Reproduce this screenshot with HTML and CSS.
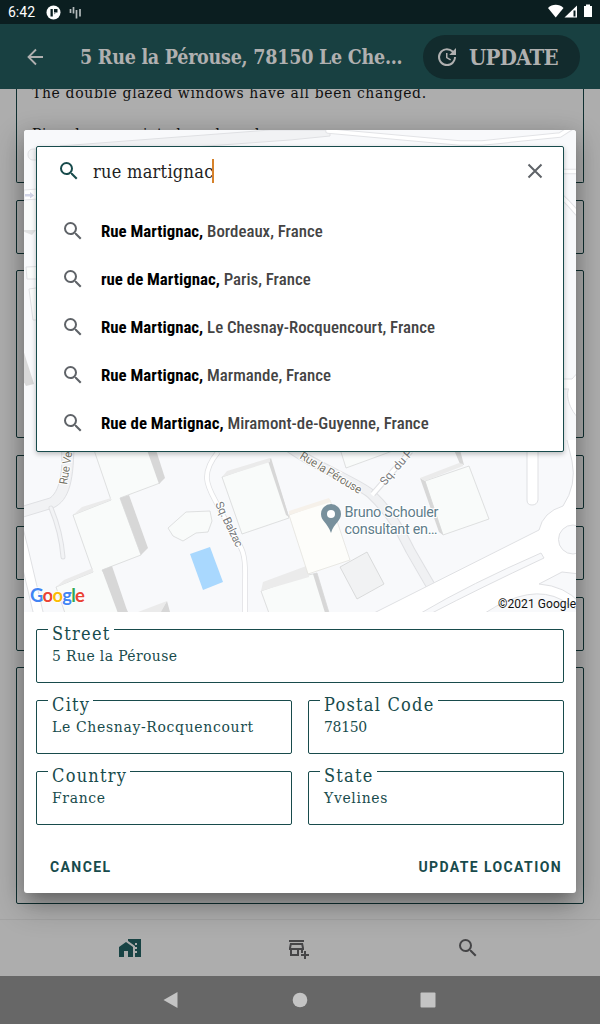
FILE: index.html
```html
<!DOCTYPE html>
<html lang="en">
<head>
<meta charset="utf-8">
<title>Update location</title>
<link rel="stylesheet" href="styles.css">
</head>
<body>
<svg class="defs" aria-hidden="true">
  <symbol id="search" viewBox="0 0 24 24"><path d="M15.5 14h-.79l-.28-.27A6.47 6.47 0 0 0 16 9.500 6.500 6.500 0 1 0 9.500 16c1.610 0 3.090-.59 4.230-1.570l.27.28v.79l5 4.990L20.490 19l-4.990-5zm-6 0C7.010 14 5 11.990 5 9.500S7.010 5 9.500 5 14 7.010 14 9.500 11.990 14 9.500 14z"/></symbol>
</svg>
<div class="screen">
  <div class="status">
    <span class="clock">6:42</span>
    <svg class="s-app" width="15" height="15" viewBox="0 0 15 15"><circle cx="7.500" cy="7.500" r="7" fill="#fff"/><path d="M4.500 4h2.300v7.500H4.500zM8 4h3.500v3.500H8z" fill="#0b1e20"/><path d="M8 7.500h2.500l-2.500 2z" fill="#8b9495"/></svg>
    <svg class="s-bars" width="13" height="13" viewBox="0 0 13 13"><path d="M1.500 3v4M4.500 1v6.500M7.500 4v8.500M11 3v7.500" stroke="#b4bbbc" stroke-width="1.700"/></svg>
    <svg class="s-right" width="46" height="14" viewBox="0 0 46 14"><path d="M0 4C4-.2 11.500-.2 15.500 4L7.700 13.500z" fill="#fff"/><path d="M16.500 13.500 29 1.500v12z" fill="#fff"/><path d="M25.500 6.500h2v6h-2z" fill="#0b1e20"/><path d="M36 2h2V.5h4V2h2v11h-8z" fill="#fff"/></svg>
  </div>
  <header class="appbar">
    <svg class="back" width="24" height="24" viewBox="0 0 24 24"><path d="M20 12H5.500M13 4.500 5.500 12l7.500 7.500" fill="none" stroke="#b0b0b0" stroke-width="1.800"/></svg>
    <h1 class="title">5 Rue la Pérouse, 78150 Le Che…</h1>
    <button class="update"><svg width="24" height="24" viewBox="0 0 24 24"><path d="M21 10.120h-6.780l2.740-2.820c-2.730-2.700-7.150-2.800-9.880-.1a6.870 6.870 0 0 0 0 9.790 7.020 7.020 0 0 0 9.880 0C18.320 15.650 19 14.080 19 12.100h2c0 1.980-.88 4.550-2.640 6.290-3.510 3.480-9.210 3.480-12.720 0-3.500-3.470-3.530-9.110-.02-12.580a8.987 8.987 0 0 1 12.650 0L21 3v7.120zM12.500 8v4.250l3.500 2.080-.72 1.210L11 13V8h1.500z"/></svg><span>UPDATE</span></button>
  </header>
  <main class="content">
    <div class="card note"><p>The double glazed windows have all been changed.</p><p class="next">Pine doors, quiet shared yard</p></div>
    <div class="card small"></div>
    <div class="card medium"></div>
    <div class="card small"></div>
    <div class="card small"></div>
    <div class="card small"></div>
    <div class="card large"></div>
  </main>
  <nav class="tabs">
    <svg width="24" height="24" viewBox="0 0 24 24" fill="#184344"><path d="M1 11v10h5v-6h4v6h5V11L8 6z"/><path d="M10 3v1.970l7 5V11h2v2h-2v2h2v2h-2v4h6V3zm9 6h-2V7h2z"/></svg>
    <svg width="24" height="24" viewBox="0 0 24 24" fill="#454547"><path d="M3 4h15v2H3zM15 17h2v-3h1v-2l-1-5H4l-1 5v2h1v6h9v-6h2zm-4 1H6v-4h5zm-5.960-6 .6-3h9.720l.6 3zM20 18v-3h-2v3h-3v2h3v3h2v-3h3v-2z"/></svg>
    <svg width="24" height="24" fill="#454547"><use href="#search"/></svg>
  </nav>
  <div class="sysnav">
    <svg width="16" height="18" viewBox="0 0 16 18"><path d="M.5 9 14.500 1v16z"/></svg>
    <svg width="16" height="16" viewBox="0 0 16 16"><circle cx="8" cy="8" r="7.300"/></svg>
    <svg width="16" height="16" viewBox="0 0 16 16"><rect x=".5" y=".5" width="15" height="15" rx="1"/></svg>
  </div>

  <section class="dialog">
    <div class="map">
      <svg class="tiles" width="552" height="482" viewBox="24 130 552 482">
        <rect x="24" y="130" width="552" height="482" fill="#f8f9fb"/>
        <g fill="#f1f2f4" stroke="#dfe0e3">
          <path d="M60 146 270 130H330V136L290 140 180 148z"/>
          <rect x="28" y="149" width="60" height="11" rx="5"/>
        </g>
        <g fill="none" stroke-linecap="round" stroke-linejoin="round">
          <path d="M328 131 460 143 482 143 560 135 580 122M560 171.500H590M560 195Q573 207 584 222" stroke="#e2e3e6" stroke-width="5.500"/>
          <path d="M328 131 460 143 482 143 560 135 580 122M560 171.500H590M560 195Q573 207 584 222" stroke="#fff" stroke-width="3.500"/>
        </g>
        <path d="M24 190l14-1v10l-14 1z" fill="#fff" stroke="#e3e4e7"/>
        <path d="M25 194h5v-2l4 3.500-4 3v-2h-5z" fill="#d1d4e6"/>
        <path d="M20 202 50 200V230H20z" fill="#f9fbfa"/>
        <g stroke="#e0e1e4" fill="#f9fbfa">
          <path d="M26 267 50 266V279H27zM29 289 50 286V320H33z"/>
        </g>
        <path d="M20 340 34 384 26 386 20 375z" fill="#d8d8d8"/>
        <path d="M20 230h16l-4 5z" fill="#e0e1e2"/>
        <path d="M563 379H572L580 370V420C565 405 567 390 569 389H563z" fill="#fff" stroke="#dfe0e3"/>
        <path d="M60 438H74C74 480 70 500 53 508L20 518V507L50 498C62 490 64 460 60 438z" fill="#f1f2f4" stroke="#dfe0e3"/>
        <path d="M51 508Q61 532 63 557" fill="none" stroke="#dfe0e3" stroke-width="5" stroke-linecap="round"/>
        <path d="M51 508Q61 532 63 557" fill="none" stroke="#f2f3f5" stroke-width="3" stroke-linecap="round"/>
        <path d="M16 500 28 548 44 616H34L16 540z" fill="#fff" stroke="#dfe0e3"/>
        <g fill="#f9fbfa" stroke="#d3d4d4" stroke-width=".7">
          <path d="M94 450 111 500 73 515 93 572 56 587 66 616H130L102 570 141 555 120 498 160 483 148 446z"/>
          <path d="M222 477 242 534 289 518 270 460z"/>
          <path d="M168 528 186 512 210 511 212 521 208 532 196 533 183 541 173 536z"/>
          <path d="M341 452 346 468 398 449H341zM425 481 469 466 489 519 443 535z"/>
          <path d="M261 591 300 577 317 573 330 616H270z"/>
        </g>
        <g fill="#d7d7d7">
          <path d="M147 450h9l9 28-6 6z"/><path d="M120 498l9-3 19 53-7 7z"/><path d="M102 570l10-4 17 50h-10z"/>
          <path d="M268 461l3-3 18 59-3-2z"/><path d="M160 612l7-11 3 11z"/>
          <path d="M420 478l5 3 18 54-4-3zM454 450h6l4 15-4-1z"/><path d="M313 574l4-1 13 43h-4z"/>
        </g>
        <g fill="#ebebeb">
          <path d="M111 500 111 498 82 507 73 515zM93 572V568L64 580 56 587zM222 477l5-6 43-13v4zM138 612l29-11-6 11zM261 591l2-9 46-17v12zM420 478l39-15 4 1v2l-38 15z"/>
        </g>
        <path d="M289 515 330 500 350 560 308 574z" fill="#fdfdfa" stroke="#e1dfda" stroke-width=".7"/>
        <path d="M289 515V511L329 498 331 502z" fill="#f6f1ea"/>
        <path d="M340 567 367 552 384 584 357 599z" fill="#f1f2f3" stroke="#cdcece" stroke-width=".7"/>
        <path d="M190 554 210 547 223 582 203 590z" fill="#a9d8fe"/>
        <path d="M218 452C196 479 212 491 221 512C243 550 246 550 245 580V614" fill="none" stroke="#dfe0e3" stroke-width="5.500"/>
        <path d="M218 452C196 479 212 491 221 512C243 550 246 550 245 580V614" fill="none" stroke="#fff" stroke-width="4"/>
        <path d="M280 440C300 460 358 482 371 494C393 515 402 534 410 550L432 588" fill="none" stroke="#dfe0e3" stroke-width="10"/>
        <path d="M280 440C300 460 358 482 371 494C393 515 402 534 410 550L432 588" fill="none" stroke="#f0f1f3" stroke-width="8"/>
        <path d="M373 494 415 446" stroke="#dfe0e3" stroke-width="6"/><path d="M372 495 415 446" stroke="#fff" stroke-width="4"/>
        <path d="M527 445V500Q527 505 532 505T538 500V445z" fill="#fff" stroke="#dfe0e3"/>
        <path d="M374 613 539 530Q543 512 563 506Q577 485 572 461L567 440H590V616H374z" fill="#fff"/>
        <path d="M374 613 539 530Q543 512 563 506Q577 485 572 461L567 440" fill="none" stroke="#dfe0e3"/>
        <g fill="#f8f9fb" stroke="#dfe0e3"><path d="M421 613Q470 584 541 553L544 558Q478 589 432 613z"/><circle cx="573" cy="539.500" r="14.500"/><path d="M539 584 562 572 580 574V603Q565 586 539 584z"/><path d="M485 613Q531 583 562 600L582 613z"/></g>
        <g class="label" fill="#77756a"><text transform="translate(67 485) rotate(-81)" textLength="45">Rue Verdi</text><text transform="translate(299 458) rotate(31)" textLength="70">Rue la Pérouse</text></g>
        <g class="label" fill="#77797c"><text transform="translate(215 504) rotate(64)" textLength="49">Sq. Balzac</text><text transform="translate(385 486) rotate(-49)" textLength="60">Sq. du Parc</text></g>
        <path d="M331 533C327 522 321 521 321 514A10 10 0 0 1 341 514C341 521 334 523 331 533z" fill="#78909c"/><circle cx="331" cy="514" r="4" fill="#fff"/>
        <g class="poi"><text x="344.500" y="516.500" textLength="94">Bruno Schouler</text><text x="344.500" y="533.500" textLength="93">consultant en…</text></g>
        <g class="glogo"><text x="30" y="601.500" textLength="55"><tspan fill="#4285f4">G</tspan><tspan fill="#ea4335">o</tspan><tspan fill="#fbbc05">o</tspan><tspan fill="#4285f4">g</tspan><tspan fill="#34a853">l</tspan><tspan fill="#ea4335">e</tspan></text></g>
        <text class="copy" x="498" y="608" textLength="78">©2021 Google</text>
      </svg>
      <div class="search">
        <div class="query">
          <svg width="24" height="24" fill="#184b4c"><use href="#search"/></svg>
          <span class="typed">rue martignac</span><i class="caret"></i>
          <svg class="close" width="24" height="24" viewBox="0 0 24 24"><path d="M5.500 5.500l13 13M18.500 5.500l-13 13" stroke="#5f6368" stroke-width="2"/></svg>
        </div>
        <ul class="results">
          <li><svg width="24" height="24"><use href="#search"/></svg><span class="cond"><b>Rue Martignac,</b> Bordeaux, France</span></li>
          <li><svg width="24" height="24"><use href="#search"/></svg><span class="cond"><b>rue de Martignac,</b> Paris, France</span></li>
          <li><svg width="24" height="24"><use href="#search"/></svg><span class="cond"><b>Rue Martignac,</b> Le Chesnay-Rocquencourt, France</span></li>
          <li><svg width="24" height="24"><use href="#search"/></svg><span class="cond"><b>Rue Martignac,</b> Marmande, France</span></li>
          <li><svg width="24" height="24"><use href="#search"/></svg><span class="cond"><b>Rue de Martignac,</b> Miramont-de-Guyenne, France</span></li>
        </ul>
      </div>
    </div>
    <div class="form">
      <div class="field wide"><label>Street</label><span>5 Rue la Pérouse</span></div>
      <div class="field"><label>City</label><span>Le Chesnay-Rocquencourt</span></div>
      <div class="field"><label>Postal Code</label><span class="digits">78150</span></div>
      <div class="field"><label>Country</label><span>France</span></div>
      <div class="field"><label>State</label><span>Yvelines</span></div>
    </div>
    <div class="actions"><button>CANCEL</button><button>UPDATE LOCATION</button></div>
  </section>
</div>
</body>
</html>
```
FILE: styles.css
```css
* { box-sizing: border-box; margin: 0; padding: 0; }
body { background: #adadad; font-family: Roboto, sans-serif; }
button { border: 0; background: none; font: inherit; }
svg { display: block; flex: none; }
.defs { position: absolute; width: 0; height: 0; }
.screen { position: relative; width: 600px; height: 1024px; overflow: hidden; display: flex; flex-direction: column; background: #adadad; }

.status { height: 24px; flex: none; background: #0b1e20; color: #fff; display: flex; align-items: center; padding: 0 8px; }
.clock { font-size: 14px; width: 38px; }
.s-bars { margin-left: 8px; }
.s-right { margin-left: auto; margin-right: -2px; margin-top: -2px; }

.appbar { height: 65px; flex: none; background: #184041; display: flex; align-items: center; padding: 0 20px 0 23px; }
.title { margin-left: 33px; width: 343px; padding-top: 2px; white-space: nowrap; color: #b0b0b0; font: bold 19.500px "Roboto Slab", "DejaVu Serif Condensed", "DejaVu Serif", serif; letter-spacing: -.25px; }
.update { width: 157px; height: 44px; border-radius: 22px; background: #122b2d; color: #b0b0b0; display: flex; align-items: center; padding-left: 12px; gap: 10px; font: bold 22px "Roboto Slab", "DejaVu Serif Condensed", "DejaVu Serif", serif; letter-spacing: -.75px; }
.update svg { fill: #b0b0b0; }
.update span { padding-top: 1px; }

.content { height: 830px; flex: none; padding: 0 16px; display: flex; flex-direction: column; gap: 17px; overflow: hidden; }
.card { flex: none; border: 1px solid #103031; border-radius: 2px; }
.card.small { height: 54px; }
.note { height: 94px; border-top: 0; padding: 0 15px; font: 15.500px/20px "Roboto Slab", "DejaVu Serif Condensed", "DejaVu Serif", serif; letter-spacing: .66px; color: #101010; border-radius: 0 0 2px 2px; }
.note p { margin-top: -6px; white-space: nowrap; }
.note .next { margin-top: 21px; }
.medium { height: 168px; margin-top: -1px; }
.large { height: 237px; margin-top: -1px; }

.tabs { height: 57px; flex: none; background: #adadad; border-top: 1px solid #a3a3a3; display: flex; justify-content: space-between; padding: 16px 120px 0 118px; }
.tabs svg:nth-child(2) { margin-right: 2px; }
.sysnav { height: 48px; flex: none; background: #676767; display: flex; justify-content: space-between; align-items: center; padding: 0 164px 0 163px; fill: #c4c4c4; }

.dialog { position: absolute; left: 24px; top: 130px; width: 552px; height: 763px; background: #fff; border-radius: 3px; box-shadow: 0 11px 15px -7px rgba(0,0,0,.2), 0 12px 30px 3px rgba(0,0,0,.24), 0 4px 20px rgba(0,0,0,.12); display: flex; flex-direction: column; overflow: hidden; }
.map { height: 482px; flex: none; padding: 16px 12px; position: relative; }
.tiles { position: absolute; inset: 0; }
.label { font: 11.500px Roboto, sans-serif; paint-order: stroke; stroke: #fff; stroke-width: 2px; }
.poi { font: 14.500px Roboto, sans-serif; fill: #607d8b; paint-order: stroke; stroke: #fff; stroke-width: 2px; }
.glogo { font: 700 18.500px Lato, sans-serif; paint-order: stroke; stroke: #fff; stroke-width: 1.500px; }
.copy { font: 12px Roboto, sans-serif; fill: #111; }

.search { position: relative; height: 306px; background: #fff; border: 1px solid #184b4c; border-radius: 2px; box-shadow: 0 2px 5px rgba(0,0,0,.25); }
.query { height: 48px; display: flex; align-items: center; padding: 0 16px 0 20px; }
.typed { margin-left: 12px; font: 18px "Roboto Slab", "DejaVu Serif Condensed", "DejaVu Serif", serif; letter-spacing: .28px; color: #222; white-space: nowrap; }
.caret { width: 2px; height: 24px; background: #d6822b; margin-left: -1px; }
.close { margin-left: auto; }
.results { list-style: none; padding-top: 12px; }
.results li { height: 48px; display: flex; align-items: center; padding-left: 24px; gap: 16px; fill: #5f6368; }
.cond { font: 500 16.850px "Roboto Condensed", Roboto, sans-serif; font-stretch: 75%; color: #444; white-space: nowrap; }
.cond b { color: #000; font-weight: 700; }

.form { padding: 17px 12px 0; display: grid; grid-template-columns: 1fr 1fr; gap: 17px 16px; }
.field { height: 54px; border: 1px solid #184b4c; border-radius: 2px; padding: 0 11px; color: #184b4c; font: 15.500px/20px "Roboto Slab", "DejaVu Serif Condensed", "DejaVu Serif", serif; letter-spacing: .68px; }
.field.wide { grid-column: 1 / -1; }
.field.wide span { letter-spacing: .4px; }
.field label { display: block; width: max-content; background: #fff; padding: 0 3px 0 4px; margin-top: -8px; font-size: 18px; line-height: 24px; letter-spacing: 1.250px; }
.field span { display: block; padding-left: 4px; white-space: nowrap; }
.field .digits { letter-spacing: -.3px; }
.actions { margin-top: auto; height: 52px; display: flex; justify-content: space-between; padding: 0 14px 0 26px; }
.actions button { height: 52px; font: 700 14px Roboto, sans-serif; letter-spacing: 1.400px; color: #184b4c; }
```
